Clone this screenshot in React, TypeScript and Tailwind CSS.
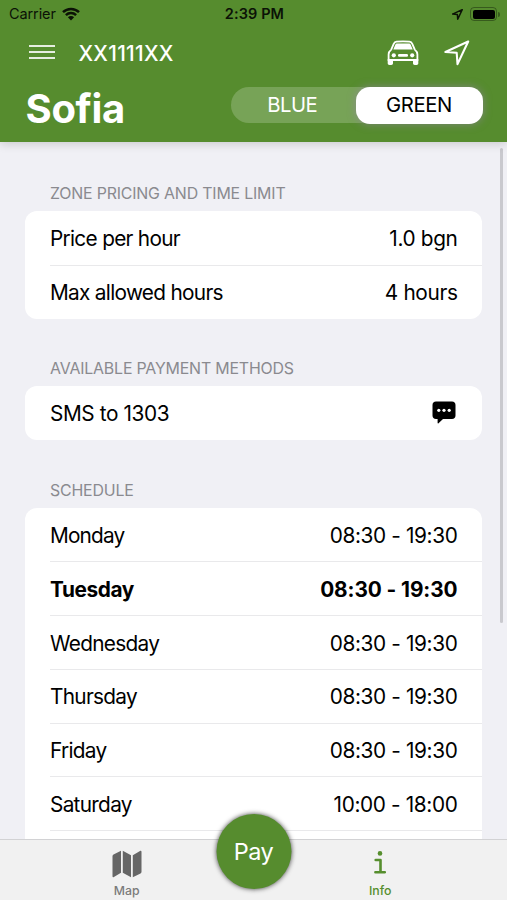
import type { ReactNode } from 'react';
import clsx from 'clsx';

interface RowItem {
  label: string;
  value: ReactNode;
  active?: boolean;
  labelClass?: string;
}

const pricing: RowItem[] = [
  { label: 'Price per hour', value: '1.0 bgn' },
  { label: 'Max allowed hours', value: '4 hours' },
];

const payment: RowItem[] = [
  { label: 'SMS to 1303', value: <MessageIcon />, labelClass: 'tracking-[-0.4px]' },
];

const schedule: RowItem[] = [
  { label: 'Monday', value: '08:30 - 19:30', labelClass: 'tracking-[-0.85px]' },
  { label: 'Tuesday', value: '08:30 - 19:30', active: true, labelClass: 'tracking-[-0.4px]' },
  { label: 'Wednesday', value: '08:30 - 19:30' },
  { label: 'Thursday', value: '08:30 - 19:30' },
  { label: 'Friday', value: '08:30 - 19:30' },
  { label: 'Saturday', value: '10:00 - 18:00' },
];

function WifiIcon() {
  return (
    <svg width="18" height="14" viewBox="0 0 18 14" fill="none" stroke="#0b1206" strokeWidth="2.5">
      <path d="M1 5.2a11.4 11.4 0 0 1 16 0" />
      <path d="M3.9 8.2a7.3 7.3 0 0 1 10.2 0" />
      <path d="M9 13.4 5.9 10.3a4.4 4.4 0 0 1 6.2 0z" fill="#0b1206" stroke="none" />
    </svg>
  );
}

function LocationIcon({ className, strokeWidth }: { className: string; strokeWidth: number }) {
  return (
    <svg
      className={className}
      viewBox="0 0 26 26"
      fill="none"
      stroke="currentColor"
      strokeWidth={strokeWidth}
      strokeLinejoin="round"
    >
      <path d="M24.2 1.5 1.4 12l11.3.8.8 11.3z" />
    </svg>
  );
}

function CarIcon() {
  return (
    <svg width="32" height="26" viewBox="0 0 32 26" fill="none">
      <path
        d="M1.6 20v-5.6c0-2 .8-3.4 2.6-4.8l2.5-5.8c.6-1.3 1.400-2 2.800-2.100 4.300-.4 8.700-.4 13 0 1.400.1 2.200.8 2.800 2.100l2.500 5.800c1.800 1.400 2.600 2.800 2.600 4.800V20z"
        stroke="#fff"
        strokeWidth="1.8"
      />
      <path d="M8.3 4.8c.3-.8.8-1.2 1.6-1.2h12.200c.8 0 1.300.4 1.600 1.200l2 4.700H6.300z" fill="#fff" />
      <path d="M.7 19h5.300v4.200c0 1-.7 1.700-1.700 1.700H2.400c-1 0-1.700-.7-1.700-1.700z" fill="#fff" />
      <path d="M26 19h5.300v4.200c0 1-.7 1.700-1.700 1.700h-1.900c-1 0-1.700-.7-1.700-1.700z" fill="#fff" />
      <circle cx="6.8" cy="15.3" r="2.1" fill="#fff" />
      <circle cx="25.2" cy="15.3" r="2.1" fill="#fff" />
      <rect x="11" y="14" width="10" height="2.800" rx="1.200" fill="#fff" />
    </svg>
  );
}

function MessageIcon() {
  return (
    <svg className="-mt-[3px] mr-[1.5px]" width="24" height="23" viewBox="0 0 24 23">
      <path
        d="M4 .5h16c2.200 0 3.500 1.300 3.500 3.500v10.500c0 2.200-1.300 3.500-3.500 3.500h-9l-4.500 4.200c-.5.400-.9.200-.9-.4V18H4C1.800 18 .5 16.700.5 14.500V4C.5 1.800 1.800.5 4 .5z"
        fill="#000"
      />
      <circle cx="6.800" cy="9.300" r="1.600" fill="#fff" />
      <circle cx="12" cy="9.300" r="1.600" fill="#fff" />
      <circle cx="17.200" cy="9.300" r="1.600" fill="#fff" />
    </svg>
  );
}

function MapIcon() {
  return (
    <svg width="30" height="28" viewBox="0 0 30 28" fill="#666">
      <path d="M.5 6.200c0-.8.300-1.300 1-1.700L9 .7v22L1.900 26.900c-.8.500-1.400.2-1.400-.7z" />
      <path d="M10.800.7 19 5.300v22l-8.200-4.600z" />
      <path d="M20.800 5.300 28 1.100c.8-.5 1.500-.2 1.500.7v20c0 .8-.3 1.300-1 1.700l-7.700 3.800z" />
    </svg>
  );
}

function InfoIcon() {
  return (
    <svg width="12" height="23" viewBox="0 0 12 23" fill="none">
      <circle cx="6" cy="2.400" r="2.300" fill="#568e2e" />
      <path
        d="M1.700 9h4.800v12M1.400 21.200h9.400"
        stroke="#568e2e"
        strokeWidth="2.600"
        strokeLinecap="round"
        strokeLinejoin="round"
      />
    </svg>
  );
}

function StatusBar() {
  return (
    <div className="grid h-[28px] grid-cols-3 items-center pr-[7px] pl-[9px] text-[14.5px] text-[#0b1206]">
      <div className="flex items-center gap-[6px] tracking-[-0.1px]">
        <span>Carrier</span>
        <WifiIcon />
      </div>
      <span className="text-center font-semibold tracking-[0.1px]">2:39 PM</span>
      <div className="flex items-center justify-end">
        <LocationIcon className="mr-[7px] size-[11px]" strokeWidth={3.5} />
        <div className="h-[14px] w-[27px] rounded-[4px] border border-[#0b1206]/40 p-[1.5px]">
          <div className="h-full rounded-[2px] bg-black" />
        </div>
        <div className="ml-px h-[5px] w-[2px] rounded-r bg-[#0b1206]/40" />
      </div>
    </div>
  );
}

function Header() {
  return (
    <header className="relative z-10 h-[142px] shrink-0 bg-[#568c2e] text-white shadow-[0_2px_9px_rgba(0,0,0,0.16)]">
      <StatusBar />
      <div className="flex h-[49px] items-center pr-[37px] pl-[28.5px]">
        <button className="mb-px flex w-[26px] flex-col gap-[4px]" aria-label="Menu">
          <span className="h-[2px] w-full bg-white/85" />
          <span className="h-[2px] w-full bg-white/85" />
          <span className="h-[2px] w-full bg-white/85" />
        </button>
        <span className="ml-[24px] pt-[2px] text-[20.8px] font-medium tracking-[0.3px]">XX1111XX</span>
        <div className="ml-auto flex items-center gap-[25px]">
          <CarIcon />
          <LocationIcon className="size-[26px]" strokeWidth={2.1} />
        </div>
      </div>
      <div className="flex h-[56px] items-center justify-between pr-[24px] pl-[25.5px]">
        <h1 className="mt-[8px] text-[40px] leading-none font-bold tracking-[-0.3px]">Sofia</h1>
        <div className="flex h-[36px] w-[252.5px] items-center rounded-full bg-white/20 text-[20.3px]">
          <span className="flex-1 pt-px pr-[2px] text-center tracking-[-0.5px]">BLUE</span>
          <span className="flex h-[37px] w-[127px] items-center justify-center rounded-[14px] bg-white pt-px pr-px tracking-[-0.4px] text-black shadow-[0_0_9px_rgba(150,130,170,0.65)]">
            GREEN
          </span>
        </div>
      </div>
    </header>
  );
}

function Section({ title, rows, partial }: { title: string; rows: RowItem[]; partial?: boolean }) {
  return (
    <section>
      <h2 className="flex h-[34px] items-center pl-[25px] text-[15.9px] tracking-[-0.18px] text-[#8a8a8f]">
        {title}
      </h2>
      <div className="overflow-hidden rounded-[12px] bg-white">
        {rows.map((row, i) => (
          <div
            key={row.label}
            className={clsx(
              'ml-[25px] flex h-[53.75px] items-center justify-between pt-px pr-[24.5px] text-[20.8px] text-black',
              i > 0 && 'border-t border-[#e9e9eb]',
              row.active && 'font-bold'
            )}
          >
            <span className={row.labelClass ?? 'tracking-[-0.7px]'}>{row.label}</span>
            <span className={row.active ? 'tracking-[-0.08px]' : 'tracking-[-0.36px]'}>{row.value}</span>
          </div>
        ))}
        {/* Next row continues below the tab bar */}
        {partial && <div className="ml-[25px] h-[54px] border-t border-[#e9e9eb]" />}
      </div>
    </section>
  );
}

function TabBar() {
  return (
    <nav className="relative z-10 flex h-[61px] shrink-0 border-t border-[#d2d2d4] bg-[#f1f1f1] text-[12.3px]">
      <div className="flex flex-1 flex-col items-center pt-[10px] font-medium text-[#7b7b7b]">
        <MapIcon />
        <span className="mt-[5px] leading-[15px]">Map</span>
      </div>
      <div className="flex flex-1 flex-col items-center pt-[11px] font-medium text-[#568e2e]">
        <InfoIcon />
        <span className="mt-[9px] leading-[15px]">Info</span>
      </div>
      <button className="absolute -top-[26.5px] left-1/2 size-[75px] -translate-x-1/2 rounded-full bg-[#568c2e] pt-px text-[23.5px] tracking-[-0.5px] text-white shadow-[0_0_5px_rgba(0,0,0,0.75)]">
        Pay
      </button>
    </nav>
  );
}

export default function App() {
  return (
    <div className="flex h-[900px] w-[507px] flex-col overflow-hidden bg-[#f0f0f5] font-['Inter',sans-serif]">
      <Header />
      <main className="relative min-h-0 flex-1 overflow-hidden px-[25px] pt-[35.3px]">
        <div className="flex flex-col gap-[33.6px]">
          <Section title="ZONE PRICING AND TIME LIMIT" rows={pricing} />
          <Section title="AVAILABLE PAYMENT METHODS" rows={payment} />
          <Section title="SCHEDULE" rows={schedule} partial />
        </div>
        {/* Scroll indicator */}
        <div className="absolute top-[6px] right-[4px] h-[475px] w-[3.5px] rounded-full bg-[#c9c9ce]" />
      </main>
      <TabBar />
    </div>
  );
}
